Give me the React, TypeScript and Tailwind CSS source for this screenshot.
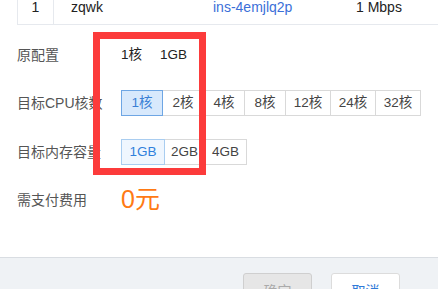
import React, { useState } from "react";

const cpuOptions = [
  { label: "1核", w: "w-[42px]" },
  { label: "2核", w: "w-[42px]" },
  { label: "4核", w: "w-[42px]" },
  { label: "8核", w: "w-[42px]" },
  { label: "12核", w: "w-[46px]" },
  { label: "24核", w: "w-[46px]" },
  { label: "32核", w: "w-[46px]" },
];

const memOptions = [
  { label: "1GB", w: "w-[44px]" },
  { label: "2GB", w: "w-[41px]" },
  { label: "4GB", w: "w-[43px]" },
];

const App: React.FC = () => {
  const [cpu, setCpu] = useState(0);
  const [mem, setMem] = useState(0);

  return (
    <div
      className="relative w-[438px] h-[289px] overflow-hidden bg-white text-[14px] text-[#333]"
      style={{ fontFamily: '"Liberation Sans", "Noto Sans CJK SC", sans-serif' }}
    >
      <div className="h-[257px] flex flex-col">
        {/* Table row */}
        <div className="-mt-[10px] ml-[17px] flex h-[35px] items-center border-l border-b border-[#e6e9ee] text-[14px] text-[#222]">
          <div className="w-[36px] h-full flex items-center justify-center border-r border-[#e6e9ee]">1</div>
          <div className="w-[159px] pl-[17px]">zqwk</div>
          <div className="w-[143px] text-[#3b6fd8]">ins-4emjlq2p</div>
          <div className="flex-1">1 Mbps</div>
        </div>

        {/* Original config */}
        <div className="mt-[17px] flex h-[26px] items-center">
          <div className="w-[121px] pl-[17px] text-[#555]">原配置</div>
          <div className="flex gap-[18px] text-[13.5px] text-[#222]">
            <span>1核</span>
            <span>1GB</span>
          </div>
        </div>

        {/* CPU */}
        <div className="mt-[22px] flex h-[26px] items-center">
          <div className="w-[121px] pl-[17px] text-[#555] whitespace-nowrap">目标CPU核数</div>
          <div className="flex text-[13.5px]">
            {cpuOptions.map((o, i) => (
              <button
                key={o.label}
                onClick={() => setCpu(i)}
                className={`${o.w} h-[26px] border flex items-center justify-center ${i > 0 ? "-ml-px" : ""} ${
                  cpu === i
                    ? "relative z-10 bg-[#d8e9fc] border-[#6ea6e4] text-[#3a7fd5]"
                    : "bg-white border-[#d9d9d9] text-[#444]"
                }`}
              >
                {o.label}
              </button>
            ))}
          </div>
        </div>

        {/* Memory */}
        <div className="mt-[23px] flex h-[26px] items-center">
          <div className="w-[121px] pl-[17px] text-[#555] whitespace-nowrap">目标内存容量</div>
          <div className="flex text-[13.5px]">
            {memOptions.map((o, i) => (
              <button
                key={o.label}
                onClick={() => setMem(i)}
                className={`${o.w} h-[26px] border flex items-center justify-center ${i > 0 ? "-ml-px" : ""} ${
                  mem === i
                    ? "relative z-10 bg-[#eff6fe] border-[#a9cdf0] text-[#2f80dc]"
                    : "bg-white border-[#d9d9d9] text-[#444]"
                }`}
              >
                {o.label}
              </button>
            ))}
          </div>
        </div>

        {/* Fee */}
        <div className="mt-[19px] flex h-[32px] items-center">
          <div className="w-[121px] pl-[17px] text-[#555]">需支付费用</div>
          <div className="text-[25px] text-[#ff7a14]">0元</div>
        </div>
      </div>

      {/* Footer */}
      <div className="h-[32px] border-t border-[#d9dde2] bg-[#eff2f5] flex justify-end gap-[19px] pr-[38px] pt-[15px]">
        <button className="w-[69px] h-[32px] shrink-0 rounded-[3px] border border-[#cfcfcf] bg-[#e6e6e6] text-[#aaa] pt-[4px]" disabled>
          确定
        </button>
        <button className="w-[69px] h-[32px] shrink-0 rounded-[3px] border border-[#dcdcdc] bg-white text-[#2f7ad8] pt-[4px]">
          取消
        </button>
      </div>

      {/* Annotation box */}
      <div className="absolute left-[93px] top-[32px] w-[113px] h-[143px] border-[7px] border-[#fc3b3b] pointer-events-none" />
    </div>
  );
};

export default App;
